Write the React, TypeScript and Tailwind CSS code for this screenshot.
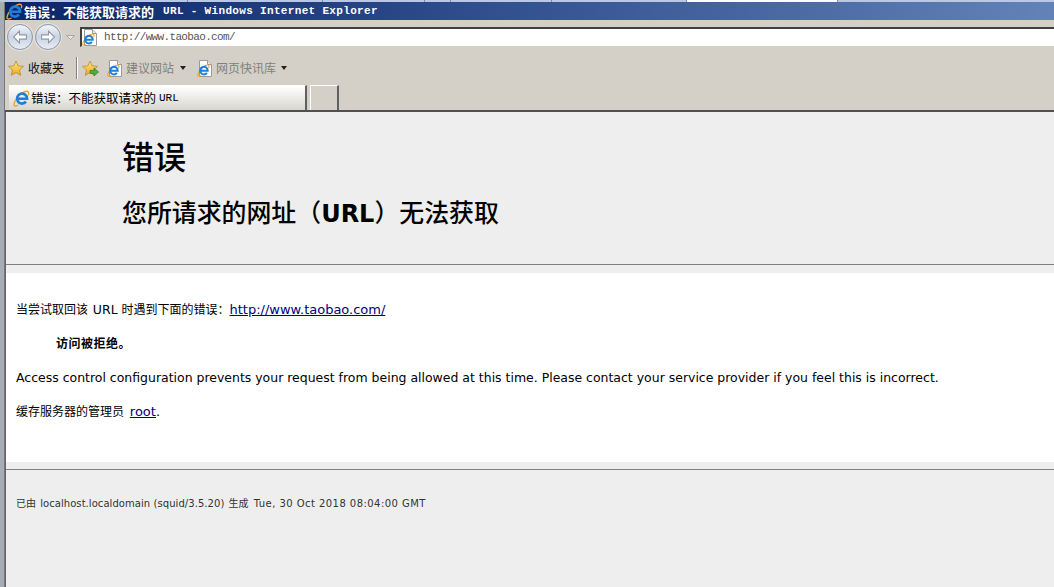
import React from 'react';

const cjk = "font-['Noto_Sans_CJK_SC',sans-serif]";
const verdana = "font-['DejaVu_Sans','Noto_Sans_CJK_SC',sans-serif]";

// IE "e" logo
const IeLogo = ({ size = 16 }: { size?: number }) => (
  <svg width={size} height={size} viewBox="0 0 16 16" className="shrink-0">
    <path d="M14.300 5C15.700 1.500 13.500.4 10.500 1.800 6 4 1.300 9.500.9 13.400c-.2 2 2 2.100 4.300.7" fill="none" stroke="#eda32f" strokeWidth="1.300" />
    <path d="M12.200 11a4.700 4.700 0 1 1 1-2.800H4.500" fill="none" stroke="#1f7fd8" strokeWidth="2.500" />
  </svg>
);

const PageIcon = () => (
  <div className="relative w-[16px] h-[17px] shrink-0">
    <svg width="16" height="17" viewBox="0 0 16 17">
      <path d="M2.500.5h8l4 4v12h-12z" fill="#ffffff" stroke="#9a9a9a" />
      <path d="M10.500.5v4h4" fill="#e6e6e6" stroke="#9a9a9a" />
    </svg>
    <div className="absolute left-0 bottom-0">
      <IeLogo size={13} />
    </div>
  </div>
);

const Star = ({ arrow = false }: { arrow?: boolean }) => (
  <svg width="17" height="17" viewBox="0 0 17 17" className="shrink-0">
    <defs>
      <linearGradient id="starFill" x1="0" y1="0" x2="0" y2="1">
        <stop offset="0" stopColor="#ffe680" />
        <stop offset="1" stopColor="#f0a81c" />
      </linearGradient>
    </defs>
    <path d="M8 1l2.200 4.900 5.300.5-4 3.600 1.200 5.300L8 12.500l-4.700 2.800 1.200-5.300-4-3.600 5.300-.5z" fill="url(#starFill)" stroke="#b98a2a" strokeWidth=".8" />
    {arrow && <path d="M8 10.500h4V8l4.500 4-4.500 4v-2.500H8z" fill="#4fae3c" stroke="#2f7d24" strokeWidth=".7" />}
  </svg>
);

const NavButton = ({ dir }: { dir: 'back' | 'forward' }) => (
  <div className="w-[26px] h-[26px] rounded-full border border-[#8f97a6] bg-gradient-to-b from-[#f4f6fa] via-[#c9d3e2] to-[#e8edf5] flex items-center justify-center shadow-[0_0_0_1px_#e4e4e0]">
    <svg width="16" height="14" viewBox="0 0 15 13" style={dir === 'forward' ? { transform: 'scaleX(-1)' } : undefined}>
      <path d="M7 1L1.500 6.500 7 12V8.500h6.500v-4H7z" fill="#ffffff" stroke="#8c96a8" strokeWidth="1" />
    </svg>
  </div>
);

const Caret = () => (
  <svg width="6" height="4" viewBox="0 0 6 4" className="shrink-0">
    <path d="M0 0h6L3 4z" fill="#222222" />
  </svg>
);

const TitleBar = () => (
  <div className="h-[18px] flex items-center bg-gradient-to-r from-[#0a246a] to-[#6382b8] pl-[1px]">
    <IeLogo size={17} />
    <span className={`ml-[1px] text-white font-bold text-[13px] leading-none whitespace-pre ${cjk}`}>错误：不能获取请求的</span>
    <span className="ml-[9px] text-white font-bold text-[11px] leading-none whitespace-pre tracking-[0.33px] font-['Liberation_Mono',monospace]">URL - Windows Internet Explorer</span>
  </div>
);

export default function App() {
  return (
    <div className="w-[1054px] h-[587px] overflow-hidden flex flex-col bg-[#d4d0c8]">
      {/* windows behind */}
      <div className="h-[2px] shrink-0 flex bg-[#b9c8e6]">
        <div className="w-[188px] border-r border-[#7f8ba3]" />
        <div className="w-[135px] border-r border-[#7f8ba3]" />
        <div className="w-[102px] border-r border-[#7f8ba3]" />
        <div className="w-[26px] border-r border-[#7f8ba3]" />
        <div className="w-[101px] border-r border-[#7f8ba3]" />
        <div className="w-[135px] border-r border-[#7f8ba3]" />
        <div className="w-[151px] bg-white border-r border-[#7f8ba3]" />
      </div>

      <div className="flex flex-1 min-h-0">
        {/* window frame */}
        <div className="w-[5px] shrink-0 bg-[#a8acb4] border-r border-[#777777]" />

        <div className="flex-1 min-w-0 flex flex-col">
          <TitleBar />

          {/* address row */}
          <div className="h-[30px] shrink-0 flex items-start pt-[4px] pl-[2px]">
            <div className="flex items-center gap-[2px]">
              <NavButton dir="back" />
              <NavButton dir="forward" />
            </div>
            <svg width="9" height="5" viewBox="0 0 9 5" className="ml-[5px] mt-[11px] shrink-0">
              <path d="M.5.500h8L4.500 4.500z" fill="#e8e8e4" stroke="#9a9a96" strokeWidth=".8" />
            </svg>
            <div className="ml-[5px] mt-[3px] flex-1 h-[20px] bg-white border-t-2 border-l-2 border-[#404040] border-b border-b-[#d4d0c8] flex items-center">
              <PageIcon />
              <span className="ml-[6px] text-[11px] tracking-[-0.65px] text-[#555555] font-['Liberation_Mono',monospace]">http://www.taobao.com/</span>
            </div>
          </div>

          {/* favorites row */}
          <div className="h-[35px] shrink-0 flex items-center pl-[3px] pt-[1px]">
            <Star />
            <span className={`ml-[3px] text-[12px] text-[#111111] ${cjk}`}>收藏夹</span>
            <div className="ml-[12px] h-[22px] w-[2px] bg-white border-l border-[#808080]" />
            <div className="ml-[4px]"><Star arrow /></div>
            <div className="ml-[8px]"><PageIcon /></div>
            <span className={`ml-[3px] text-[12px] text-[#808080] ${cjk}`}>建议网站</span>
            <div className="ml-[6px]"><Caret /></div>
            <div className="ml-[11px]"><PageIcon /></div>
            <span className={`ml-[3px] text-[12px] text-[#808080] ${cjk}`}>网页快讯库</span>
            <div className="ml-[5px]"><Caret /></div>
          </div>

          {/* tab row */}
          <div className="h-[27px] shrink-0 flex items-end pl-[4px] border-b-2 border-[#505050]">
            <div className="w-[298px] h-[25px] flex items-center pl-[4px] border-t border-r-2 border-[#ffffff] border-r-[#606060] bg-gradient-to-b from-white to-[#d8d6d0]">
              <IeLogo size={17} />
              <span className={`ml-[1px] text-[12.5px] text-black whitespace-pre ${cjk}`}>错误：不能获取请求的</span>
              <span className="ml-[3px] text-[11px] text-black font-['Liberation_Mono',monospace]">URL</span>
            </div>
            <div className="ml-[3px] w-[29px] h-[25px] border-t border-l border-white border-r-2 border-r-[#606060]" />
          </div>

          {/* page */}
          <div className="flex-1 min-h-0 bg-[#eeeeee] border-l border-[#666666] flex flex-col text-black">
            <div className="h-[153px] shrink-0 pl-[116px] border-b border-[#808080] flex flex-col">
              <h1 className={`mt-[21px] text-[32px] leading-[44px] font-medium ${cjk}`}>错误</h1>
              <h2 className={`mt-[18px] text-[24.9px] leading-[32px] whitespace-pre font-medium ${cjk}`}>
                您所请求的网址（<b className="text-[24px] font-['DejaVu_Sans',sans-serif]">URL</b>）无法获取
              </h2>
            </div>
            <div className="h-[8px] shrink-0" />
            <div className={`h-[189px] shrink-0 bg-white pl-[10px] text-[13px] ${verdana}`}>
              <p className="mt-[28px] leading-[18px]">
                <span className="text-[12px]">当尝试取回该 </span><span className="ml-[1px] text-[12.5px]">URL</span><span className="text-[12px]"> 时遇到下面的错误：</span>
                <a className="text-[#000080] underline">http://www.taobao.com/</a>
              </p>
              <p className="mt-[16px] ml-[40px] leading-[18px] font-bold text-[12px] tracking-[0.5px]">访问被拒绝。</p>
              <p className="mt-[16px] leading-[18px] whitespace-nowrap text-[12.47px]">Access control configuration prevents your request from being allowed at this time. Please contact your service provider if you feel this is incorrect.</p>
              <p className="mt-[16px] leading-[18px]">
                <span className="text-[12px]">缓存服务器的管理员 </span>
                <a className="ml-[2px] text-[#000080] underline">root</a>.
              </p>
            </div>
            <div className="h-[8px] shrink-0 border-b border-[#808080]" />
            <div className={`mt-[27px] pl-[10px] text-[10px] leading-[14px] text-[#333333] whitespace-pre ${verdana}`}>
              已由 <span className="ml-[1px] tracking-[0.06px]">localhost.localdomain (squid/3.5.20)</span> <span className="ml-[1px]">生成</span> <span className="ml-[2px] tracking-[0.45px]">Tue, 30 Oct 2018 08:04:00 GMT</span>
            </div>
          </div>
        </div>
      </div>
    </div>
  );
}
